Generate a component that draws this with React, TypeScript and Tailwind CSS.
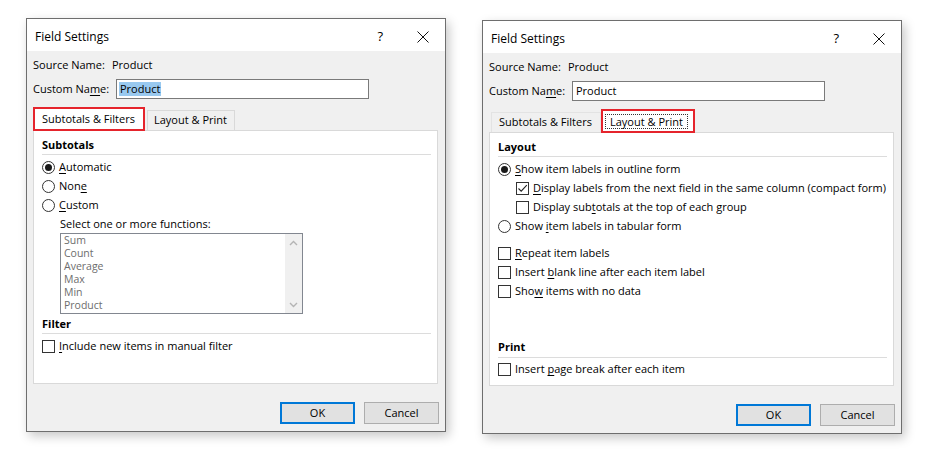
import React from "react";

const font = "font-['Open_Sans','Noto_Sans',sans-serif] text-[11px] text-black";

function Mn({ text, at }: { text: string; at: number }) {
  return (
    <span>
      {text.slice(0, at)}
      <span className="underline underline-offset-[2px]">{text[at]}</span>
      {text.slice(at + 1)}
    </span>
  );
}

function Radio({ checked }: { checked?: boolean }) {
  return (
    <span className="w-[13px] h-[13px] rounded-full border border-[#333] bg-white flex items-center justify-center shrink-0">
      {checked && <span className="w-[7px] h-[7px] rounded-full bg-[#1a1a1a]" />}
    </span>
  );
}

function Check({ checked }: { checked?: boolean }) {
  return (
    <span className="w-[13px] h-[13px] border border-[#333] bg-white flex items-center justify-center shrink-0">
      {checked && (
        <svg width="11" height="11" viewBox="0 0 11 11">
          <path d="M1.5 5.5 L4.2 8.2 L9.8 2.2" stroke="#222" strokeWidth="1.1" fill="none" />
        </svg>
      )}
    </span>
  );
}

function Row({ children, className = "" }: { children: React.ReactNode; className?: string }) {
  return <div className={"flex items-center h-[19px] gap-[4px] " + className}>{children}</div>;
}

function Header({ title, className = "" }: { title: string; className?: string }) {
  return (
    <div className={"font-bold leading-[16px] pb-[1px] border-b border-[#dcdcdc] " + className}>{title}</div>
  );
}

function Chevron({ up }: { up?: boolean }) {
  return (
    <svg width="9" height="6" viewBox="0 0 9 6">
      <polyline
        points={up ? "1,5 4.5,1.5 8,5" : "1,1 4.5,4.5 8,1"}
        stroke="#b4b4b4"
        strokeWidth="1.4"
        fill="none"
      />
    </svg>
  );
}

function SubtotalsPanel() {
  const fns = ["Sum", "Count", "Average", "Max", "Min", "Product"];
  return (
    <div className="flex flex-col">
      <Header title="Subtotals" />
      <div className="mt-[3px]">
        <Row>
          <Radio checked />
          <Mn text="Automatic" at={0} />
        </Row>
        <Row>
          <Radio />
          <Mn text="None" at={3} />
        </Row>
        <Row>
          <Radio />
          <Mn text="Custom" at={0} />
        </Row>
      </div>
      <div className="ml-[18px] h-[18px] flex items-center">Select one or more functions:</div>
      <div className="ml-[18px] w-[243px] h-[81px] border border-[#828790] bg-white flex">
        <div className="flex-1 pl-[3px] text-[#6d6d6d] text-[10.5px]">
          {fns.map((f) => (
            <div key={f} className="h-[13px] leading-[13px]">
              {f}
            </div>
          ))}
        </div>
        <div className="w-[17px] bg-[#f0f0f0] flex flex-col justify-between">
          <div className="h-[17px] flex items-center justify-center">
            <Chevron up />
          </div>
          <div className="h-[17px] flex items-center justify-center">
            <Chevron />
          </div>
        </div>
      </div>
      <Header title="Filter" className="mt-[2px]" />
      <Row className="mt-[3px]">
        <Check />
        <Mn text="Include new items in manual filter" at={0} />
      </Row>
    </div>
  );
}

function LayoutPanel() {
  return (
    <div className="flex flex-col">
      <Header title="Layout" />
      <div className="mt-[3px]">
        <Row>
          <Radio checked />
          <Mn text="Show item labels in outline form" at={0} />
        </Row>
        <Row className="ml-[18px]">
          <Check checked />
          <Mn text="Display labels from the next field in the same column (compact form)" at={0} />
        </Row>
        <Row className="ml-[18px]">
          <Check />
          <Mn text="Display subtotals at the top of each group" at={11} />
        </Row>
        <Row>
          <Radio />
          <Mn text="Show item labels in tabular form" at={5} />
        </Row>
      </div>
      <div className="mt-[8px]">
        <Row>
          <Check />
          <Mn text="Repeat item labels" at={0} />
        </Row>
        <Row>
          <Check />
          <Mn text="Insert blank line after each item label" at={7} />
        </Row>
        <Row>
          <Check />
          <Mn text="Show items with no data" at={3} />
        </Row>
      </div>
      <Header title="Print" className="mt-[38px] pb-[2px]" />
      <Row className="mt-[2px]">
        <Check />
        <Mn text="Insert page break after each item" at={7} />
      </Row>
    </div>
  );
}

function Dialog({ tab, className = "" }: { tab: "subtotals" | "layout"; className?: string }) {
  const sub = tab === "subtotals";
  return (
    <div
      className={
        "w-[420px] h-[414px] border border-[#6e6e6e] bg-white flex flex-col shadow-[3px_4px_10px_rgba(0,0,0,0.22)] " +
        className
      }
    >
      {/* title bar */}
      <div className="h-[32px] shrink-0 flex items-center justify-between pl-[8px] pr-[16px] pt-[3px] text-[12px]">
        <span>Field Settings</span>
        <div className="flex items-center">
          <span className="text-[13px]">?</span>
          <svg className="ml-[34px]" width="12" height="12" viewBox="0 0 12 12">
            <path d="M0.5 0.5 L11.5 11.5 M11.5 0.5 L0.5 11.5" stroke="#111" strokeWidth="1" />
          </svg>
        </div>
      </div>

      <div className="flex-1 bg-[#f0f0f0] px-[6px] pt-[4px] flex flex-col">
        <div className="h-[20px] flex items-center">
          <span className="w-[79px]">Source Name:</span>
          <span>Product</span>
        </div>
        <div className="h-[20px] mt-[4px] flex items-center">
          <span className="w-[83px]">
            <Mn text="Custom Name:" at={9} />
          </span>
          <div className="w-[253px] h-[20px] border border-[#7a7a7a] bg-white flex items-center pl-[2px]">
            <span className={sub ? "bg-[#99c9ef] px-[1px] leading-[14px]" : "px-[1px]"}>Product</span>
          </div>
        </div>

        {/* tabs */}
        <div className="h-[32px] -mb-[1px] flex items-end relative z-10">
          {sub ? (
            <>
              <div className="h-[24px] w-[112px] border-2 border-[#e5242c] bg-white pl-[7px] flex items-center">
                Subtotals &amp; Filters
              </div>
              <div className="h-[20px] w-[88px] mb-[1px] ml-[2px] border border-b-0 border-[#d9d9d9] bg-[#f0f0f0] pl-[6px] flex items-center">
                Layout &amp; Print
              </div>
            </>
          ) : (
            <>
              <div className="h-[20px] w-[110px] mb-[1px] ml-[2px] border border-b-0 border-[#e3e3e3] bg-[#f0f0f0] pl-[7px] flex items-center">
                Subtotals &amp; Filters
              </div>
              <div className="h-[24px] w-[94px] border-2 border-[#e5242c] bg-white pl-[2px] flex items-center">
                <span className="border border-dotted border-[#333] px-[4px] leading-[13px]">Layout &amp; Print</span>
              </div>
            </>
          )}
        </div>

        <div className="w-[405px] h-[254px] border border-[#d9d9d9] bg-white pl-[8px] pr-[6px] pt-[6px]">
          {sub ? <SubtotalsPanel /> : <LayoutPanel />}
        </div>

        <div className="mt-[18px] flex justify-end gap-[9px]">
          <button className="w-[75px] h-[22px] border-2 border-[#0078d7] bg-[#e1e1e1] flex items-center justify-center">
            OK
          </button>
          <button className="w-[75px] h-[22px] border border-[#adadad] bg-[#e1e1e1] flex items-center justify-center">
            Cancel
          </button>
        </div>
      </div>
    </div>
  );
}

export default function App() {
  return (
    <div className={"w-[928px] h-[455px] bg-white flex items-start gap-[36px] pl-[26px] pt-[18px] " + font}>
      <Dialog tab="subtotals" />
      <Dialog tab="layout" className="mt-[2px]" />
    </div>
  );
}
